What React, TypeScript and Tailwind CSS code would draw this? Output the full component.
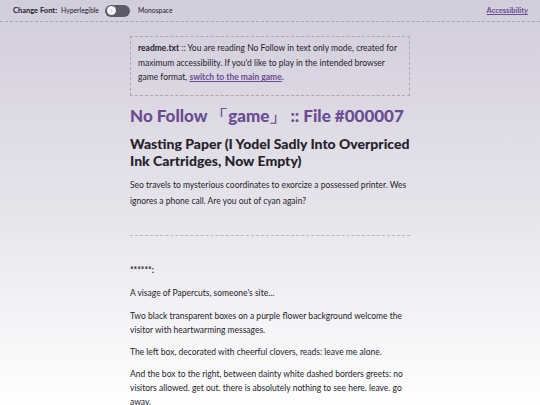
export default function App() {
  return (
    <div
      className="min-h-[405px] w-full bg-gradient-to-b from-[#d1cddb] via-[#e6e4ea] to-[#ffffff] text-[#26222c]"
      style={{ fontFamily: "Lato, 'Noto Sans', sans-serif" }}
    >
      <header className="h-[22px] flex items-center justify-between pl-[13px] pr-3 border-b border-dashed border-[#a9a4b2] text-[7.5px]">
        <div className="flex items-center">
          <span className="font-bold">Change Font:</span>
          <span className="ml-[4px] text-[6.8px]">Hyperlegible</span>
          <div className="ml-[6px] mr-[8px] w-[25px] h-[12px] rounded-full bg-[#5f5b66] flex items-center px-[2px]">
            <div className="w-[9px] h-[9px] rounded-full bg-[#f4f3f6] flex items-center justify-center text-[5px] text-[#5f5b66] leading-none">
              ‹
            </div>
          </div>
          <span className="text-[6.8px]">Monospace</span>
        </div>
        <a href="#" className="font-bold text-[#6a4c93] underline text-[7.5px]">
          Accessibility
        </a>
      </header>

      <main className="w-[280px] mx-auto pt-[14px] text-[8.5px]">
        <div className="border border-dashed border-[#aaa6b2] px-[7px] pt-[4px] pb-[10px] leading-[14.5px]">
          <span className="font-bold">readme.txt</span> :: You are reading No Follow in text only mode, created for
          maximum accessibility. If you'd like to play in the intended browser game format,{" "}
          <a href="#" className="font-bold text-[#6a4c93] underline">
            switch to the main game
          </a>
          .
        </div>

        <h1 className="mt-[10px] text-[17px] font-black text-[#6a4c93] leading-[20px] whitespace-nowrap">
          No Follow 「game」 :: File #000007
        </h1>
        <h2 className="mt-[9px] text-[14px] font-black leading-[17px]">
          Wasting Paper (I Yodel Sadly Into Overpriced Ink Cartridges, Now Empty)
        </h2>
        <p className="mt-[8px] leading-[16px]">
          Seo travels to mysterious coordinates to exorcize a possessed printer. Wes ignores a phone call. Are you out
          of cyan again?
        </p>

        <div className="mt-[26px] border-t border-dashed border-[#b9b5bf]" />

        <p className="mt-[27px] font-bold leading-[14px]">******:</p>
        <p className="mt-[9px] leading-[14px]">A visage of Papercuts, someone's site...</p>
        <p className="mt-[9px] leading-[14px]">
          Two black transparent boxes on a purple flower background welcome the visitor with heartwarming messages.
        </p>
        <p className="mt-[8px] leading-[14px]">
          The left box, decorated with cheerful clovers, reads: leave me alone.
        </p>
        <p className="mt-[8px] leading-[14px]">
          And the box to the right, between dainty white dashed borders greets: no visitors allowed. get out. there is
          absolutely nothing to see here. leave. go away.
        </p>
      </main>
    </div>
  );
}
